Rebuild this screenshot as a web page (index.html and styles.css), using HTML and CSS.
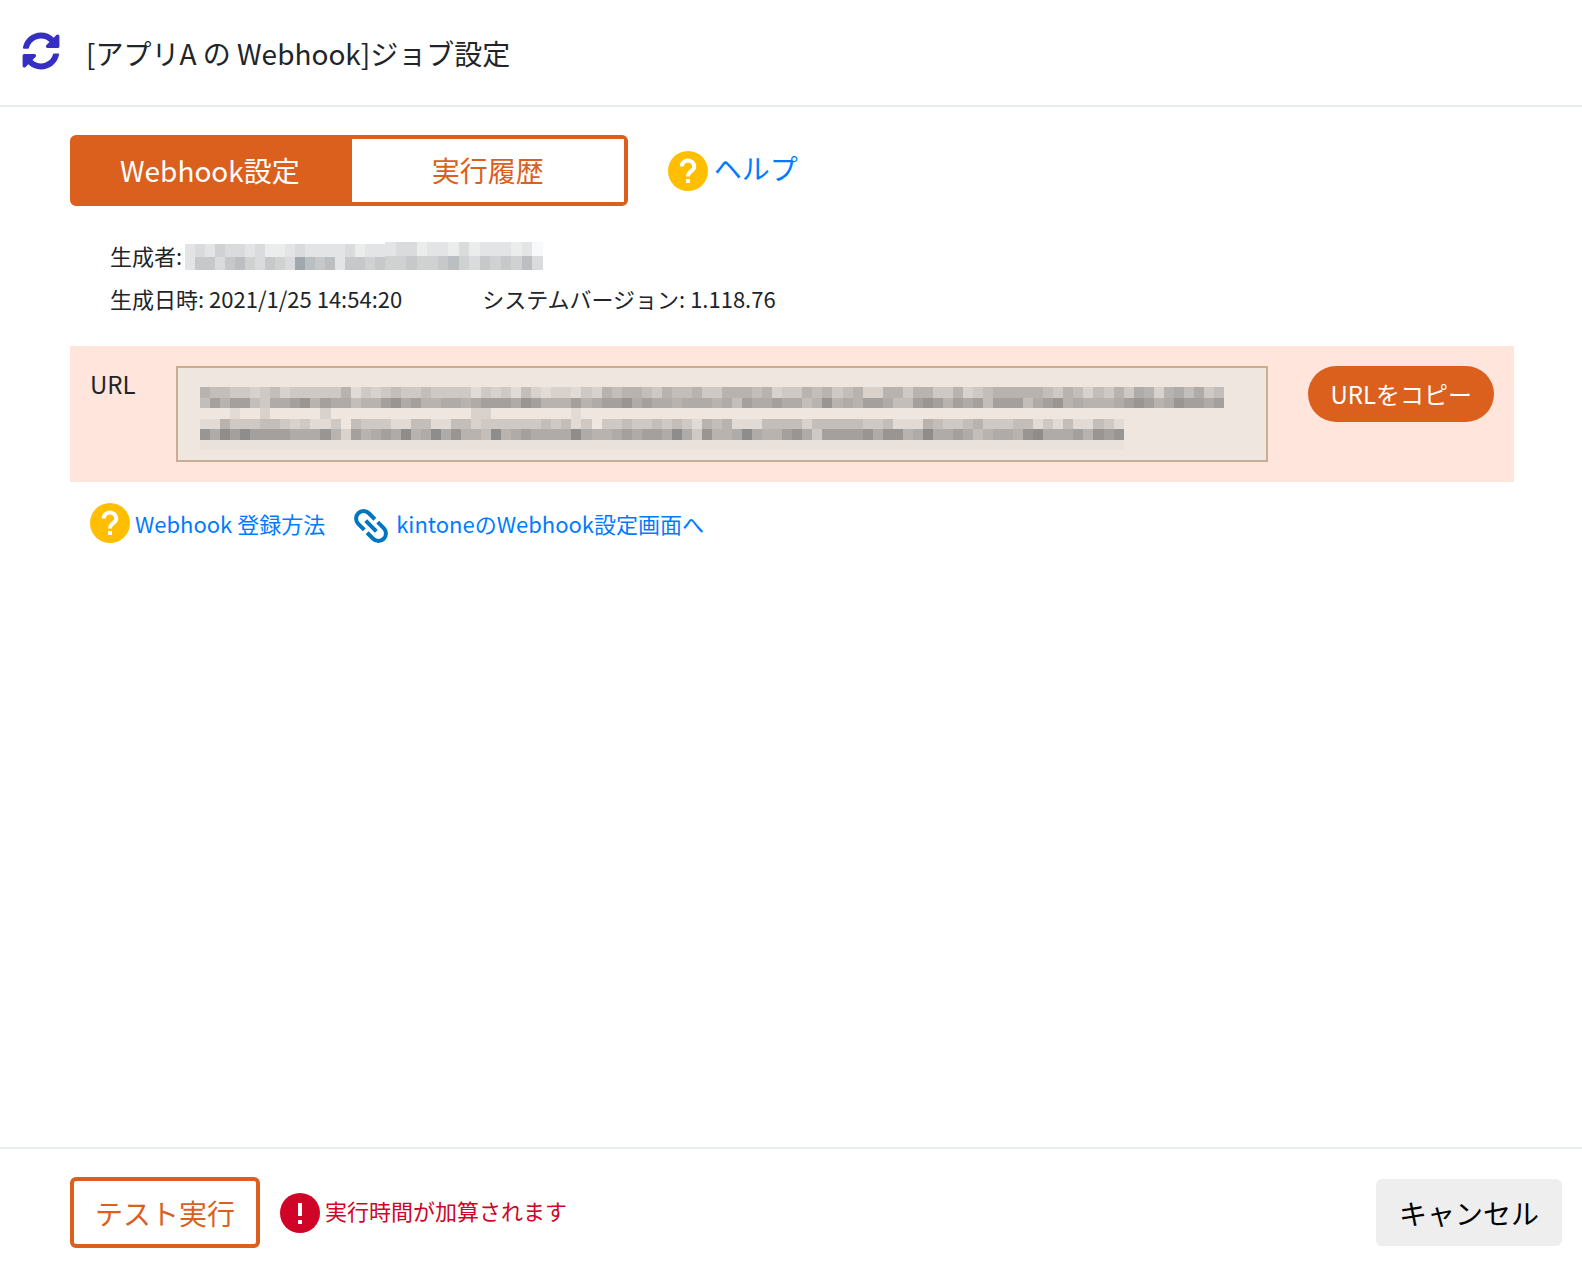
FILE: index.html
```html
<!DOCTYPE html>
<html lang="ja">
<head>
  <meta charset="UTF-8" />
  <meta name="viewport" content="width=device-width, initial-scale=1" />
  <title>ジョブ設定</title>
  <link rel="stylesheet" href="styles.css">
</head>
<body>
<header class="header">
  <svg class="sync-icon" viewBox="0 0 512 512" aria-hidden="true">
    <path d="M370.7 133.3C339.500 104 298.900 88 255.800 88c-77.500.1-144.300 53.200-162.800 126.900-1.300 5.400-6.100 9.200-11.700 9.200H24.100c-7.500 0-13.200-6.800-11.800-14.200C33.900 94.900 134.800 8 256 8c66.400 0 126.800 26.100 171.300 68.700L463 41C478.100 25.900 504 36.600 504 57.900V192c0 13.300-10.700 24-24 24H345.900c-21.400 0-32.100-25.900-17-41l41.800-41.700zM32 296h134.100c21.400 0 32.100 25.900 17 41l-41.800 41.800c31.300 29.300 71.800 45.300 114.900 45.300 77.400-.1 144.300-53.100 162.800-126.800 1.300-5.400 6.100-9.200 11.700-9.200h57.300c7.500 0 13.200 6.800 11.800 14.200C478.100 417.100 377.200 504 256 504c-66.400 0-126.800-26.100-171.300-68.700L49 471C33.900 486.100 8 475.400 8 454.100V320c0-13.300 10.700-24 24-24z"/>
  </svg>
  <h1>[アプリA の Webhook]ジョブ設定</h1>
</header>

<main class="main-container">
  <div class="tab-row">
    <div class="tabs">
      <button class="tab active" type="button">Webhook設定</button>
      <button class="tab" type="button">実行履歴</button>
    </div>
    <a class="help-link large" href="#">
      <svg class="round-icon" viewBox="0 0 40 40" aria-hidden="true">
        <circle cx="20" cy="20" r="20" fill="#ffbf00"/>
        <path d="M13.800 15.500a6.200 5.600 0 1 1 9.800 4.300c-2.200 1.700-3.600 2.700-3.600 5.700" fill="none" stroke="#fff" stroke-width="4"/>
        <path d="M18 28h4v4h-4z" fill="#fff"/>
      </svg>
      <span>ヘルプ</span>
    </a>
  </div>

  <!-- Job info -->
  <div class="meta">
    <div class="meta-row">
      <span>生成者:</span>
      <span class="masked-name" role="img" aria-label="非表示">
        <svg id="nameLeft" width="200" height="26"></svg>
        <svg id="nameRight" width="158" height="28"></svg>
      </span>
    </div>
    <div class="meta-row wide">
      <span>生成日時: 2021/1/25 14:54:20</span>
      <span>システムバージョン: 1.118.76</span>
    </div>
  </div>

  <!-- Webhook URL -->
  <div class="url-panel">
    <label for="url">URL</label>
    <div class="url-box">
      <textarea id="url" readonly></textarea>
      <svg class="url-mask" id="urlMask" width="1024" height="63" aria-hidden="true"></svg>
    </div>
    <button class="copy-btn" type="button">URLをコピー</button>
  </div>

  <div class="links">
    <a class="help-link" href="#">
      <svg class="round-icon" viewBox="0 0 40 40" aria-hidden="true">
        <circle cx="20" cy="20" r="20" fill="#ffbf00"/>
        <path d="M13.800 15.500a6.200 5.600 0 1 1 9.800 4.300c-2.200 1.700-3.600 2.700-3.600 5.700" fill="none" stroke="#fff" stroke-width="4"/>
        <path d="M18 28h4v4h-4z" fill="#fff"/>
      </svg>
      <span>Webhook 登録方法</span>
    </a>
    <a class="help-link" href="#">
      <svg class="chain-icon" viewBox="0 0 40 40" aria-hidden="true">
        <g transform="rotate(45 20 20)" fill="none" stroke="#0075c2" stroke-width="4">
          <path d="M18 12.500H9.500a7.500 7.500 0 0 0 0 15H18M22 12.500h8.500a7.500 7.500 0 0 1 0 15H22M12.500 20h15"/>
        </g>
      </svg>
      <span>kintoneのWebhook設定画面へ</span>
    </a>
  </div>
</main>

<footer class="footer">
  <button class="test-btn" type="button">テスト実行</button>
  <div class="warning">
    <svg class="round-icon" viewBox="0 0 40 40" aria-hidden="true">
      <circle cx="20" cy="20" r="20" fill="#cf0427"/>
      <path d="M18 10h4v13h-4zM18 27h4v4h-4z" fill="#fff"/>
    </svg>
    <span>実行時間が加算されます</span>
  </div>
  <button class="cancel-btn" type="button">キャンセル</button>
</footer>
<script src="mosaic.js"></script>
</body>
</html>
```

FILE: styles.css
```css
* {
  box-sizing: border-box;
}
body {
  margin: 0;
  min-height: 100vh;
  display: flex;
  flex-direction: column;
  font-family: "Noto Sans CJK JP", sans-serif;
  font-size: 22px;
  color: #212529;
  background: #fff;
}
button {
  font-family: inherit;
  font-size: 28px;
  line-height: 40px;
  cursor: pointer;
}
a {
  color: #007bff;
  text-decoration: none;
}
.header {
  display: flex;
  align-items: center;
  gap: 26px;
  height: 107px;
  padding: 0 22px 4px;
  border-bottom: 2px solid #e9ecef;
}
.header h1 {
  margin: 4px 0 0;
  font-size: 28px;
  font-weight: 400;
  line-height: 40px;
}
.sync-icon {
  width: 38px;
  height: 38px;
  fill: #3530c2;
}
.main-container {
  flex: 1;
  padding: 28px 68px 28px 70px;
}
.tab-row {
  display: flex;
  align-items: center;
  gap: 40px;
}
.tabs {
  display: flex;
  border: 4px solid #db5f1d;
  border-radius: 6px;
}
.tab {
  min-width: 272px;
  padding: 11px 48px 12px;
  border: none;
  background: #fff;
  color: #db5f1d;
}
.tab.active {
  padding-left: 46px;
  padding-right: 52px;
  background: #db5f1d;
  color: #fff;
}
.help-link {
  display: flex;
  align-items: center;
  gap: 5px;
}
.help-link.large {
  gap: 6px;
  font-size: 28px;
}
.large span {
  padding-bottom: 6px;
}
.round-icon {
  width: 40px;
  height: 40px;
}
.chain-icon {
  width: 40px;
  height: 40px;
  margin: 6px 0 0 -2px;
}
.meta {
  padding: 28px 40px 26px;
  line-height: 43px;
}
.meta-row {
  display: flex;
  gap: 3px;
}
.meta-row.wide {
  gap: 80px;
}
.masked-name {
  display: flex;
  align-items: flex-end;
  height: 36px;
}
.url-panel {
  display: flex;
  align-items: flex-start;
  padding: 20px;
  background: #ffe5dc;
}
.url-panel label {
  width: 86px;
  font-size: 24px;
  line-height: 36px;
}
.url-box {
  position: relative;
  flex: 1;
  height: 96px;
  margin-right: 40px;
}
.url-box textarea {
  display: block;
  width: 100%;
  height: 100%;
  padding: 20px;
  border: 2px solid #c8ad93;
  background: #efe6e0;
  resize: none;
}
.url-mask {
  position: absolute;
  top: 21px;
  left: 24px;
}
.copy-btn {
  padding: 8px 22px;
  border: none;
  border-radius: 28px;
  background: #db5f1d;
  color: #fff;
  font-size: 24px;
}
.links {
  display: flex;
  gap: 28px;
  padding: 18px 20px;
}
.footer {
  display: flex;
  align-items: center;
  padding: 28px 20px 20px 70px;
  border-top: 2px solid #e9ecef;
}
.test-btn {
  padding: 12px 21px 11px;
  border: 4px solid #db5f1d;
  border-radius: 6px;
  background: #fff;
  color: #db5f1d;
}
.warning {
  display: flex;
  align-items: center;
  gap: 5px;
  margin-left: 20px;
  color: #cf0427;
}
.warning span {
  padding-bottom: 6px;
}
.cancel-btn {
  margin-left: auto;
  padding: 14px 23px 13px;
  border: none;
  border-radius: 6px;
  background: #eee;
  color: #000;
}
```

FILE: mosaic.js
```js
// Each digit is one block of the mosaic, 0 is empty
const urlColors = ['', '#e2dad5', '#d9d1cc', '#cec9c5', '#c3beba', '#b8b3af', '#aeaba8', '#a3a09e', '#999592', '#8e8d8c'];
const nameColors = ['', '#f8f9fb', '#ebecec', '#e3e4e6', '#dadbdc', '#d0d2d2', '#c7c8ca', '#bcbfc2', '#a0a7ae'];

const urlRows = [
  '544332342333335132343343333132314212213254554354453355545233545345225535533523455555435424353652564634',
  '475774366785766455786755665677768755575677867665666564766766458565776447875767477746785655567875687767',
  '00010020000020000000000000022000000001',
  '11533344323113043331144114423333334341303343343431545111444424444433411154334533344131411431',
  '86979777766685275676956968554956766669655676776963855696557863777786885696676456658966675878',
  '11111111111111111111111111111111111111111111111111111111111111111111111111111111111111111111'
];

function drawMosaic(id, rows, colors, cellW, cellH, fade) {
  const svg = document.getElementById(id);
  rows.forEach((row, y) => {
    [...row].forEach((level, x) => {
      if (level === '0') return;
      const rect = document.createElementNS('http://www.w3.org/2000/svg', 'rect');
      rect.setAttribute('x', x * cellW);
      rect.setAttribute('y', y * cellH);
      rect.setAttribute('width', cellW);
      rect.setAttribute('height', cellH);
      rect.setAttribute('fill', colors[level]);
      rect.setAttribute('shape-rendering', 'crispEdges');
      if (y === fade) rect.setAttribute('opacity', '0.4');
      svg.appendChild(rect);
    });
  });
}

drawMosaic('urlMask', urlRows, urlColors, 1024 / 102, 63 / 6, 5);
drawMosaic('nameLeft', ['34354434223433334233', '36646754654876736656'], nameColors, 10, 13);
drawMosaic('nameRight', ['344233242333231', '556556754656574'], nameColors, 158 / 15, 14);
```
